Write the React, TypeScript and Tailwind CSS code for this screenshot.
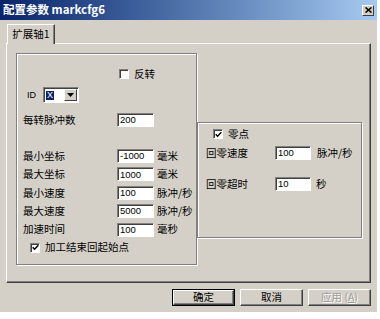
import React from "react";

const cjk = "font-['Noto_Sans_CJK_SC',sans-serif]";
const lat = "font-['Liberation_Sans',sans-serif]";

function Check({ checked }: { checked?: boolean }) {
  return (
    <div className="w-[10px] h-[10px] bg-white border border-t-[#808080] border-l-[#808080] border-b-white border-r-white shadow-[inset_1px_1px_0_#404040] flex items-center justify-center shrink-0">
      {checked && (
        <svg width="7" height="7" viewBox="0 0 7 7">
          <path d="M0.7 3.2 L2.6 5.2 L6.3 1.2" stroke="black" strokeWidth="1.5" fill="none" />
        </svg>
      )}
    </div>
  );
}

function Field({ v, narrow }: { v: string; narrow?: boolean }) {
  return (
    <div
      className={
        (narrow ? "w-[36px] " : "w-[37px] ") +
        "h-[14px] bg-white border border-t-[#808080] border-l-[#808080] border-b-white border-r-white shadow-[inset_1px_1px_0_#404040] flex items-center pl-[2px] text-[9.5px] leading-none text-black shrink-0 " +
        lat
      }
    >
      {v}
    </div>
  );
}

function Row({ label, v, unit }: { label: string; v: string; unit?: string }) {
  return (
    <div className="h-[14px] flex items-center">
      <div className={"w-[100px] pl-[6px] text-[10.5px] leading-none " + cjk}>{label}</div>
      <Field v={v} />
      {unit && <div className={"ml-[3px] text-[10.5px] leading-none " + cjk}>{unit}</div>}
    </div>
  );
}

function Btn({ children, def, disabled }: { children: React.ReactNode; def?: boolean; disabled?: boolean }) {
  return (
    <div className={"w-[63px] h-[17px] " + (def ? "border border-black" : "")}>
      <div className="w-full h-full border border-t-white border-l-white border-b-[#404040] border-r-[#404040] shadow-[inset_-1px_-1px_0_#808080] flex items-center justify-center">
        <span
          className={
            "text-[10.5px] leading-none " +
            cjk +
            (disabled ? " text-[#a09d98] [text-shadow:1px_1px_0_#ffffff]" : " text-black")
          }
        >
          {children}
        </span>
      </div>
    </div>
  );
}

export default function App() {
  return (
    <div className="w-[380px] h-[319px] bg-white">
      <div className="w-[377px] h-[312px] bg-[#d4d0c8] flex flex-col">
        {/* title bar */}
        <div className="h-[20px] flex items-center justify-between pl-[3px] pr-[3px] bg-linear-to-r from-[#0a246a] to-[#a6caf0]">
          <span className={"text-white font-bold text-[11.5px] leading-none " + cjk}>配置参数 markcfg6</span>
          <div className="w-[12px] h-[11px] bg-[#d4d0c8] border border-t-white border-l-white border-b-[#404040] border-r-[#404040] flex items-center justify-center">
            <svg width="7" height="6" viewBox="0 0 7 6">
              <path d="M0.5 0.5 L6.5 5.5 M6.5 0.5 L0.5 5.5" stroke="black" strokeWidth="1.6" />
            </svg>
          </div>
        </div>

        {/* tab header */}
        <div className="h-[23px] pt-[4px] pl-[7px] flex">
          <div className="w-[48px] h-[20px] border-t border-l border-white border-r border-r-[#404040] shadow-[inset_-1px_0_0_#808080] flex items-center justify-center bg-[#d4d0c8] relative z-10">
            <span className={"text-[10.5px] leading-none text-black " + cjk}>扩展轴1</span>
          </div>
        </div>

        {/* tab panel */}
        <div className="ml-[6px] w-[365px] h-[240px] border border-t-white border-l-white border-b-[#404040] border-r-[#404040] shadow-[inset_-1px_-1px_0_#808080] flex items-start pt-[9px] pl-[9px]">
          {/* left group */}
          <div className="w-[181px] h-[212px] border border-[#808080] shadow-[1px_1px_0_#ffffff,inset_1px_1px_0_#ffffff] flex flex-col shrink-0">
            <div className="mt-[13px] h-[14px] flex items-center pl-[102px] gap-[5px]">
              <Check />
              <span className={"text-[10.5px] leading-none " + cjk}>反转</span>
            </div>
            <div className="mt-[6px] h-[16px] flex items-center">
              <span className={"w-[26px] pl-[10px] text-[9px] leading-none " + lat}>ID</span>
              <div className="w-[36px] h-[16px] bg-white border border-t-[#808080] border-l-[#808080] border-b-white border-r-white shadow-[inset_1px_1px_0_#404040] flex items-center justify-between pl-[2px] pr-[1px]">
                <span className={"bg-[#0a246a] text-white text-[9px] leading-none px-[1px] " + lat}>X</span>
                <div className="w-[13px] h-[12px] bg-[#d4d0c8] border border-t-white border-l-white border-b-[#404040] border-r-[#404040] flex items-center justify-center">
                  <svg width="7" height="4" viewBox="0 0 7 4">
                    <path d="M0 0 H7 L3.5 4 Z" fill="black" />
                  </svg>
                </div>
              </div>
            </div>
            <div className="mt-[10px]">
              <Row label="每转脉冲数" v="200" />
            </div>
            <div className="mt-[22px] flex flex-col gap-[4.4px]">
              <Row label="最小坐标" v="-1000" unit="毫米" />
              <Row label="最大坐标" v="1000" unit="毫米" />
              <Row label="最小速度" v="100" unit="脉冲/秒" />
              <Row label="最大速度" v="5000" unit="脉冲/秒" />
              <Row label="加速时间" v="100" unit="毫秒" />
            </div>
            <div className="mt-[4px] h-[14px] flex items-center pl-[13px] gap-[5px]">
              <Check checked />
              <span className={"text-[10.5px] leading-none " + cjk}>加工结束回起始点</span>
            </div>
          </div>

          {/* right group */}
          <div className="mt-[69px] w-[165px] h-[116px] border border-[#808080] shadow-[1px_1px_0_#ffffff,inset_1px_1px_0_#ffffff] flex flex-col shrink-0">
            <div className="mt-[4px] h-[14px] flex items-center pl-[15px] gap-[5px]">
              <Check checked />
              <span className={"text-[10.5px] leading-none " + cjk}>零点</span>
            </div>
            <div className="mt-[5px] h-[14px] flex items-center">
              <div className={"w-[77px] pl-[8px] text-[10.5px] leading-none " + cjk}>回零速度</div>
              <Field v="100" narrow />
              <div className={"ml-[6px] text-[10.5px] leading-none " + cjk}>脉冲/秒</div>
            </div>
            <div className="mt-[17px] h-[14px] flex items-center">
              <div className={"w-[77px] pl-[8px] text-[10.5px] leading-none " + cjk}>回零超时</div>
              <Field v="10" narrow />
              <div className={"ml-[5px] text-[10.5px] leading-none " + cjk}>秒</div>
            </div>
          </div>
        </div>

        {/* buttons */}
        <div className="mt-[6px] flex justify-end gap-[5px] pr-[6px]">
          <Btn def>确定</Btn>
          <Btn>取消</Btn>
          <Btn disabled>
            应用 (<span className="underline">A</span>)
          </Btn>
        </div>
      </div>
    </div>
  );
}
